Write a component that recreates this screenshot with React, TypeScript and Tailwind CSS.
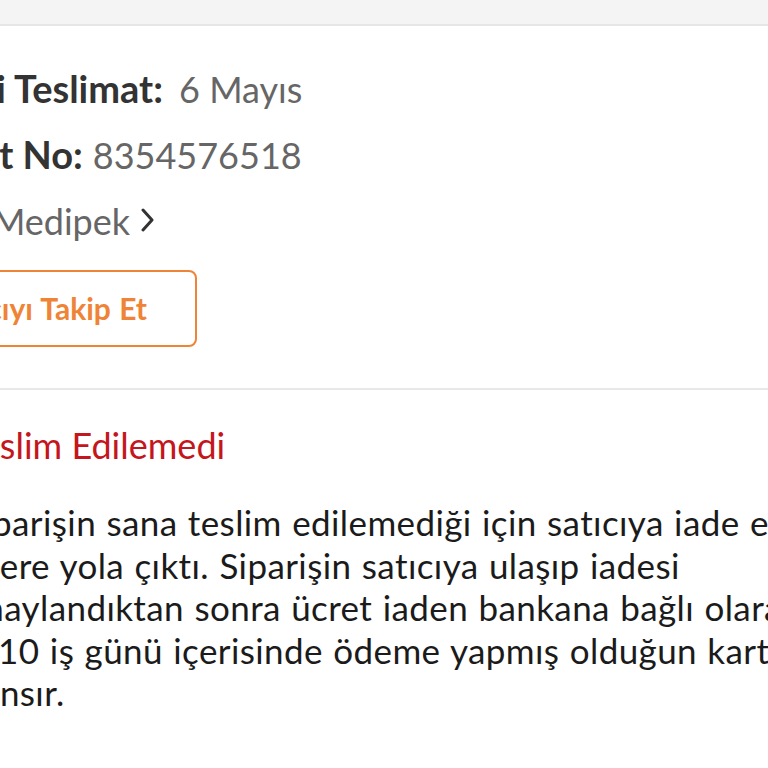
import React from 'react';

const font = { fontFamily: 'Lato, "Noto Sans", sans-serif' };

function Chevron() {
  return (
    <svg width="14" height="24" viewBox="0 0 14 24" className="ml-[11px] inline-block self-center">
      <polyline points="2,2 11,12 2,22" fill="none" stroke="#333333" strokeWidth="3" strokeLinecap="round" strokeLinejoin="round" />
    </svg>
  );
}

function Row({ label, gap, children }: { label: string; gap: string; children: React.ReactNode }) {
  return (
    <div className="flex h-[66px] items-baseline leading-[66px] whitespace-nowrap">
      <span className="text-[38px] font-bold text-[#333333]">{label}</span>
      <span className={`${gap} text-[36px] text-[#666666]`}>{children}</span>
    </div>
  );
}

export default function App() {
  return (
    <div className="w-[768px] h-[768px] overflow-hidden bg-white" style={font}>
      {/* top strip */}
      <div className="h-[26px] bg-[#f4f4f4] border-b-2 border-[#e6e6e6]" />

      {/* order info */}
      <div className="ml-[-126px] pt-[29px]">
        <Row label="Tahmini Teslimat:" gap="ml-[16px]">6 Mayıs</Row>
        <Row label="Teslimat No:" gap="ml-[10px]">8354576518</Row>
        <div className="flex h-[66px] items-baseline leading-[66px] whitespace-nowrap">
          <span className="text-[38px] font-bold text-[#333333]">Satıcı:</span>
          <span className="ml-[16px] text-[36px] text-[#666666]">Medipek</span>
          <Chevron />
        </div>
        <button className="mt-[17px] flex h-[77px] w-[323px] items-center justify-end rounded-[8px] border-2 border-[#ef8336] bg-white pr-[48px] text-[30px] font-bold [word-spacing:1px] text-[#ef8336] whitespace-nowrap">
          Satıcıyı Takip Et
        </button>
      </div>

      <div className="mt-[41px] h-[2px] bg-[#e8e8e8]" />

      {/* status */}
      <div className="ml-[-36px] pt-[30px]">
        <div className="text-[36px] leading-[50px] text-[#c4161c] whitespace-nowrap">Teslim Edilemedi</div>
        <p className="mt-[31px] text-[35px] leading-[42.5px] tracking-[0.4px] [word-spacing:1px] text-[#1b1b1b] whitespace-nowrap">
          Siparişin sana teslim edilemediği için satıcıya iade edilmek
          <br />
          üzere yola çıktı. Siparişin satıcıya ulaşıp iadesi
          <br />
          onaylandıktan sonra ücret iaden bankana bağlı olarak
          <br />
          2-10 iş günü içerisinde ödeme yapmış olduğun kartına
          <br />
          yansır.
        </p>
      </div>
    </div>
  );
}
